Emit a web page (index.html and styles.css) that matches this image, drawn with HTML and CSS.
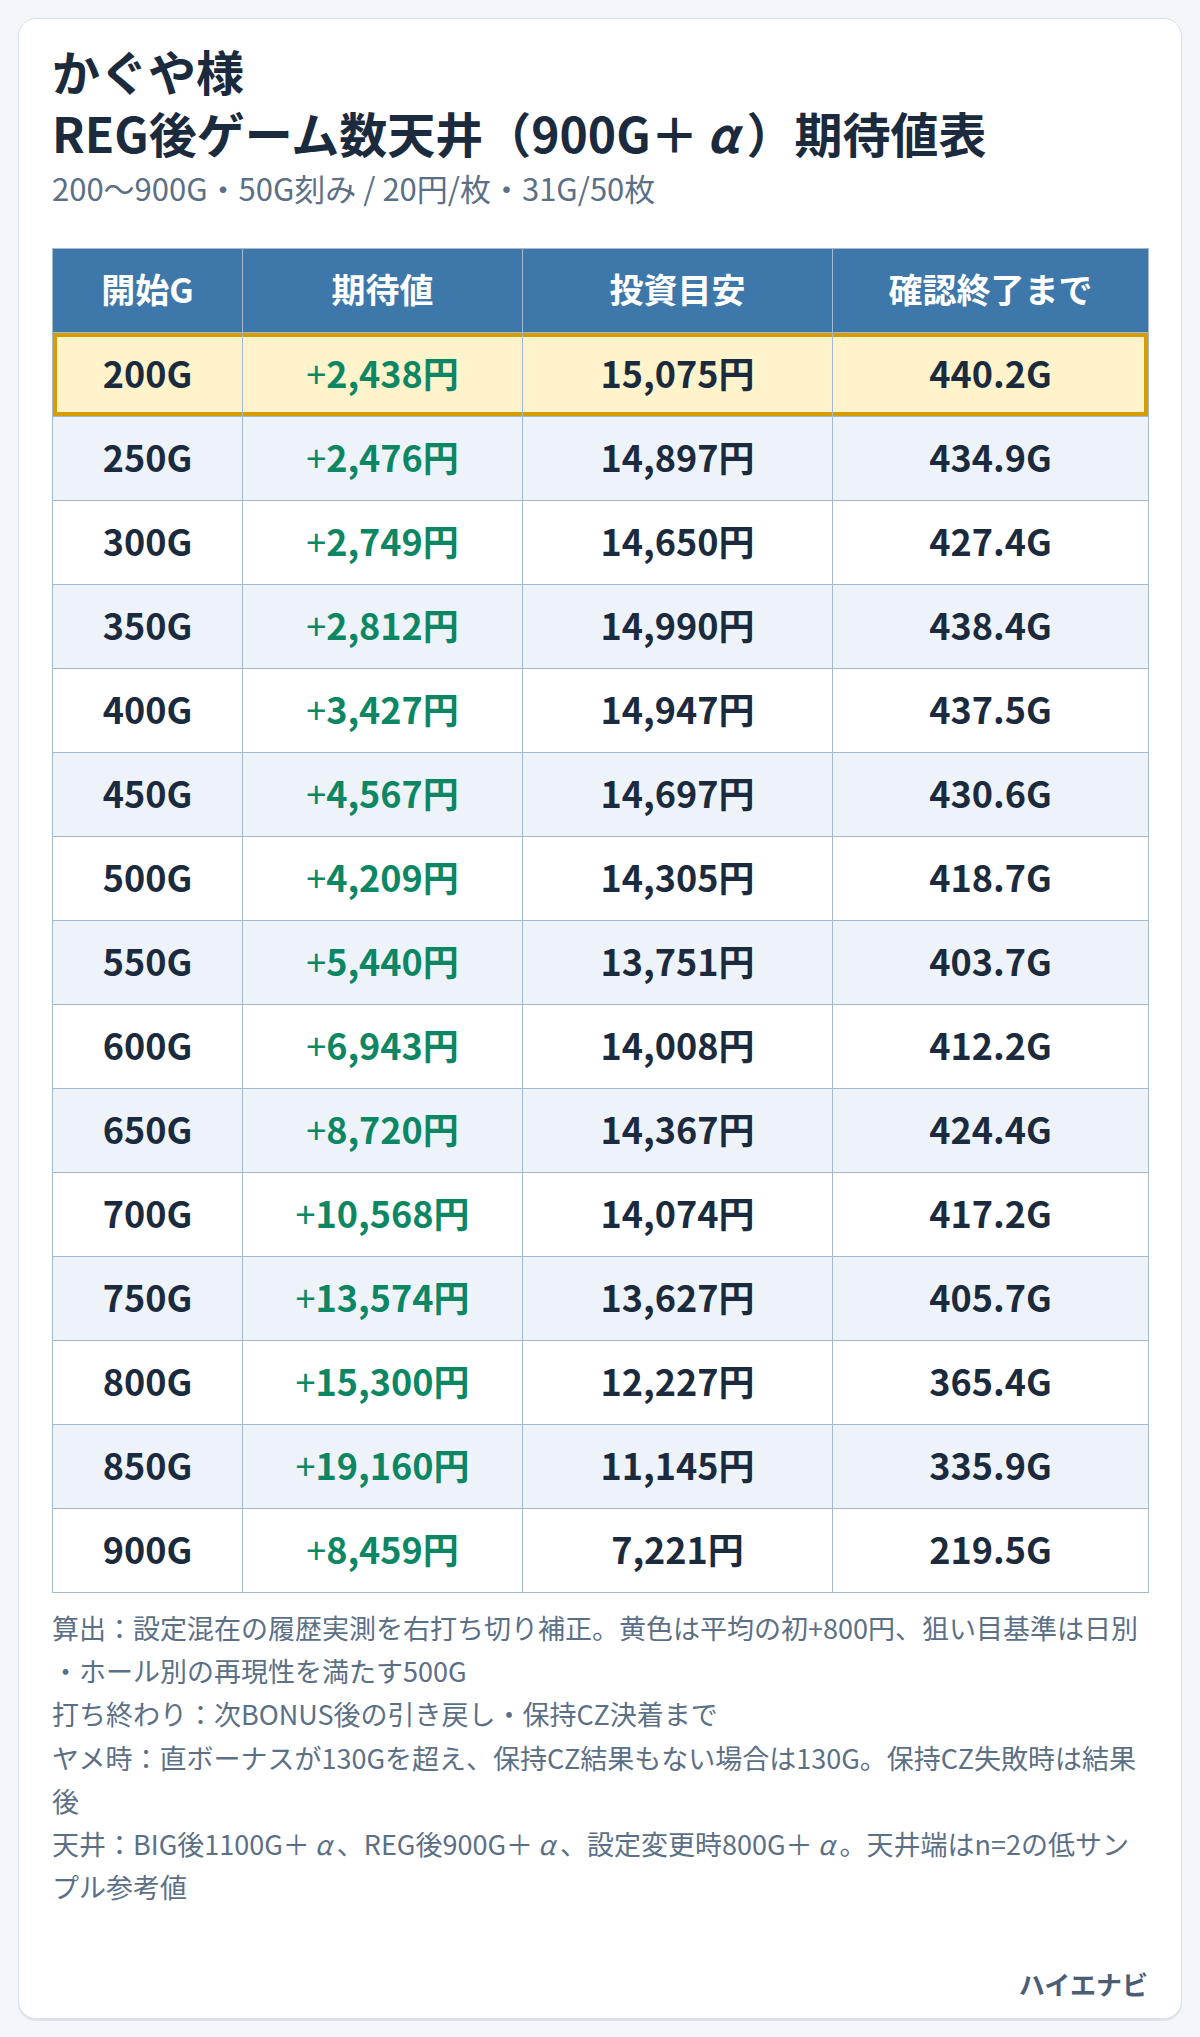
FILE: index.html
```html
<!DOCTYPE html>
<html lang="ja">
<head>
<meta charset="utf-8">
<title>かぐや様 REG後ゲーム数天井 期待値表</title>
<link rel="stylesheet" href="styles.css">
</head>
<body>
<main class="card">
  <h1 class="title"><span class="title-line">かぐや様</span><span class="title-line">REG後ゲーム数天井（900G＋<span class="greek">α</span>）期待値表</span></h1>
  <p class="subtitle">200〜900G・50G刻み / 20円/枚・31G/50枚</p>
  <table class="ev-table">
    <colgroup>
      <col class="c1"><col class="c2"><col class="c3"><col class="c4">
    </colgroup>
    <thead>
      <tr><th>開始G</th><th>期待値</th><th>投資目安</th><th>確認終了まで</th></tr>
    </thead>
    <tbody>
      <tr class="hl"><td>200G</td><td class="ev"><span class="sign">+</span>2,438円</td><td>15,075円</td><td>440.2G</td></tr>
      <tr><td>250G</td><td class="ev"><span class="sign">+</span>2,476円</td><td>14,897円</td><td>434.9G</td></tr>
      <tr><td>300G</td><td class="ev"><span class="sign">+</span>2,749円</td><td>14,650円</td><td>427.4G</td></tr>
      <tr><td>350G</td><td class="ev"><span class="sign">+</span>2,812円</td><td>14,990円</td><td>438.4G</td></tr>
      <tr><td>400G</td><td class="ev"><span class="sign">+</span>3,427円</td><td>14,947円</td><td>437.5G</td></tr>
      <tr><td>450G</td><td class="ev"><span class="sign">+</span>4,567円</td><td>14,697円</td><td>430.6G</td></tr>
      <tr><td>500G</td><td class="ev"><span class="sign">+</span>4,209円</td><td>14,305円</td><td>418.7G</td></tr>
      <tr><td>550G</td><td class="ev"><span class="sign">+</span>5,440円</td><td>13,751円</td><td>403.7G</td></tr>
      <tr><td>600G</td><td class="ev"><span class="sign">+</span>6,943円</td><td>14,008円</td><td>412.2G</td></tr>
      <tr><td>650G</td><td class="ev"><span class="sign">+</span>8,720円</td><td>14,367円</td><td>424.4G</td></tr>
      <tr><td>700G</td><td class="ev"><span class="sign">+</span>10,568円</td><td>14,074円</td><td>417.2G</td></tr>
      <tr><td>750G</td><td class="ev"><span class="sign">+</span>13,574円</td><td>13,627円</td><td>405.7G</td></tr>
      <tr><td>800G</td><td class="ev"><span class="sign">+</span>15,300円</td><td>12,227円</td><td>365.4G</td></tr>
      <tr><td>850G</td><td class="ev"><span class="sign">+</span>19,160円</td><td>11,145円</td><td>335.9G</td></tr>
      <tr><td>900G</td><td class="ev"><span class="sign">+</span>8,459円</td><td>7,221円</td><td>219.5G</td></tr>
    </tbody>
  </table>
  <div class="notes">
    <p>算出：設定混在の履歴実測を右打ち切り補正。黄色は平均の初+800円、狙い目基準は日別・ホール別の再現性を満たす500G</p>
    <p>打ち終わり：次BONUS後の引き戻し・保持CZ決着まで</p>
    <p>ヤメ時：直ボーナスが130Gを超え、保持CZ結果もない場合は130G。保持CZ失敗時は結果後</p>
    <p>天井：BIG後1100G＋<span class="greek">α</span>、REG後900G＋<span class="greek">α</span>、設定変更時800G＋<span class="greek">α</span>。天井端はn=2の低サンプル参考値</p>
  </div>
  <div class="brand">ハイエナビ</div>
</main>
</body>
</html>
```
FILE: styles.css
```css
* { box-sizing: border-box; }
html, body { margin: 0; }
body {
  padding: 18px;
  background: #f2f5f9;
  font-family: "Noto Sans CJK JP", "Noto Sans", sans-serif;
  color: #1b2a3d;
}
.card {
  min-height: calc(100vh - 36px);
  display: flex;
  flex-direction: column;
  background: #ffffff;
  border: 1px solid #d8e1eb;
  border-radius: 18px;
  box-shadow: 0 2px 0 #dce4ee;
  padding: 20px 33px 16px;
}
.title {
  margin: 0;
  font-size: 48px;
  line-height: 62px;
  font-weight: 700;
  color: #1b2a3d;
}
.title-line { display: block; }
.greek {
  display: inline-block;
  width: 1em;
  text-align: center;
  font-style: italic;
}
.subtitle {
  margin: 4px 0 39px;
  font-size: 31px;
  line-height: 42px;
  color: #5b6f86;
}
.ev-table {
  width: 100%;
  border-collapse: collapse;
  table-layout: fixed;
}
.c1 { width: 190px; }
.c2 { width: 280px; }
.c3 { width: 310px; }
.c4 { width: 316px; }
.ev-table th,
.ev-table td {
  height: 84px;
  padding: 0 0 5px;
  text-align: center;
  vertical-align: middle;
  border: 1px solid #a3b9cf;
  font-weight: 700;
}
.ev-table th {
  background: #3e77a9;
  color: #ffffff;
  font-size: 34px;
}
.ev-table td {
  font-size: 36px;
  color: #1b2a3d;
}
.ev-table tbody tr:nth-child(even) td { background: #eef3fa; }
.ev-table td.ev { color: #0d8763; }
.sign { font-weight: 400; }
.ev-table tr.hl td {
  background: #fef3cb;
  box-shadow: inset 0 4px 0 #d69c00, inset 0 -4px 0 #d69c00;
}
.ev-table tr.hl td:first-child {
  box-shadow: inset 4px 0 0 #d69c00, inset 0 4px 0 #d69c00, inset 0 -4px 0 #d69c00;
}
.ev-table tr.hl td:last-child {
  box-shadow: inset -4px 0 0 #d69c00, inset 0 4px 0 #d69c00, inset 0 -4px 0 #d69c00;
}
.notes {
  margin-top: 13px;
  font-size: 27px;
  line-height: 1.6;
  color: #5b6f86;
  line-break: loose;
}
.notes p { margin: 0; }
.brand {
  margin-top: auto;
  text-align: right;
  font-size: 26px;
  line-height: 36px;
  font-weight: 700;
  color: #4b5e75;
}
```
